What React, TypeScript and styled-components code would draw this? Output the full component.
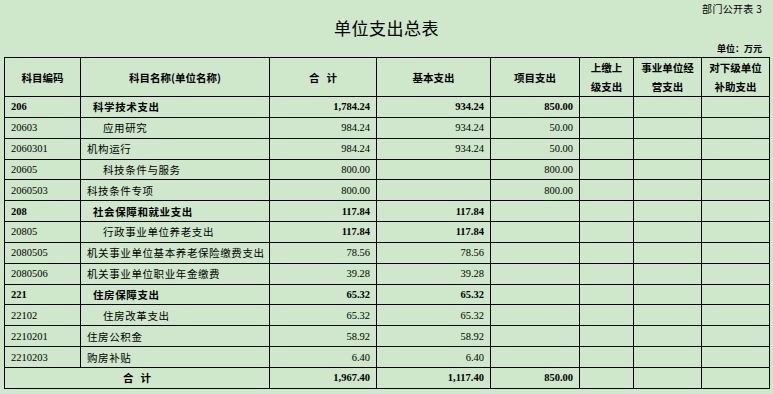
import styled, { createGlobalStyle } from "styled-components";

type Row = {
  code: string;
  name: string;
  level: 1 | 2 | 3;
  total: string;
  basic: string;
  project: string;
};

const rows: Row[] = [
  { code: "206", name: "科学技术支出", level: 1, total: "1,784.24", basic: "934.24", project: "850.00" },
  { code: "20603", name: "应用研究", level: 2, total: "984.24", basic: "934.24", project: "50.00" },
  { code: "2060301", name: "机构运行", level: 3, total: "984.24", basic: "934.24", project: "50.00" },
  { code: "20605", name: "科技条件与服务", level: 2, total: "800.00", basic: "", project: "800.00" },
  { code: "2060503", name: "科技条件专项", level: 3, total: "800.00", basic: "", project: "800.00" },
  { code: "208", name: "社会保障和就业支出", level: 1, total: "117.84", basic: "117.84", project: "" },
  { code: "20805", name: "行政事业单位养老支出", level: 2, total: "117.84", basic: "117.84", project: "" },
  { code: "2080505", name: "机关事业单位基本养老保险缴费支出", level: 3, total: "78.56", basic: "78.56", project: "" },
  { code: "2080506", name: "机关事业单位职业年金缴费", level: 3, total: "39.28", basic: "39.28", project: "" },
  { code: "221", name: "住房保障支出", level: 1, total: "65.32", basic: "65.32", project: "" },
  { code: "22102", name: "住房改革支出", level: 2, total: "65.32", basic: "65.32", project: "" },
  { code: "2210201", name: "住房公积金", level: 3, total: "58.92", basic: "58.92", project: "" },
  { code: "2210203", name: "购房补贴", level: 3, total: "6.40", basic: "6.40", project: "" },
];

// 20805 carries its amounts in bold in the source sheet
const boldAmounts = new Set(["20805"]);

const colWidths = [76, 189, 107, 114, 89, 54, 68, 68];

const GlobalStyle = createGlobalStyle`
  html, body {
    margin: 0;
    padding: 0;
    background: #cfe7cb;
  }
  body {
    font-family: "Noto Sans CJK SC", "Liberation Sans", sans-serif;
    color: #000;
  }
`;

const Page = styled.div`
  width: 773px;
  height: 394px;
  display: flex;
  flex-direction: column;
  padding: 1px 4px 0 4px;
  box-sizing: border-box;
`;

const SheetNo = styled.div`
  align-self: flex-end;
  font-size: 10px;
  line-height: 16px;
  height: 16px;
  padding-right: 7px;
  letter-spacing: 0.3px;
`;

const Title = styled.h1`
  margin: 1px 0 0 0;
  text-align: center;
  font-size: 17px;
  font-weight: 400;
  line-height: 20px;
  letter-spacing: 0.5px;
`;

const Unit = styled.div`
  align-self: flex-end;
  margin-top: 4px;
  font-size: 9px;
  line-height: 14px;
  height: 14px;
  padding-right: 7px;
  font-weight: 700;
`;

const Table = styled.table`
  margin-top: 1px;
  width: 765px;
  table-layout: fixed;
  border-collapse: collapse;
  border: 1px solid #000;
`;

const HeadCell = styled.th`
  border: 1px solid #000;
  height: 38px;
  padding: 0;
  font-size: 10.5px;
  font-weight: 700;
  line-height: 19px;
  text-align: center;
  vertical-align: middle;
`;

const Cell = styled.td<{ $bold?: boolean; $align?: "left" | "right" | "center"; $indent?: number; $num?: boolean }>`
  border: 1px solid #000;
  height: 19.85px;
  padding: 0 ${(p) => (p.$align === "right" ? 6 : 0)}px 0 ${(p) => p.$indent ?? 0}px;
  font-size: 10.5px;
  line-height: 13px;
  white-space: nowrap;
  overflow: hidden;
  text-align: ${(p) => p.$align ?? "left"};
  font-weight: ${(p) => (p.$bold ? 700 : 400)};
  font-family: ${(p) =>
    p.$num
      ? '"Liberation Serif", "Noto Sans CJK SC", serif'
      : '"Noto Sans CJK SC", "Liberation Sans", sans-serif'};
  vertical-align: middle;
`;

const NameText = styled.span`
  letter-spacing: 0.6px;
`;

const indentFor = (level: number) => (level === 1 ? 12 : level === 2 ? 22 : 6);

const App = () => {
  return (
    <Page>
      <GlobalStyle />
      <SheetNo>部门公开表 3</SheetNo>
      <Title>单位支出总表</Title>
      <Unit>单位：万元</Unit>
      <Table>
        <colgroup>
          {colWidths.map((w, i) => (
            <col key={i} style={{ width: w }} />
          ))}
        </colgroup>
        <thead>
          <tr>
            <HeadCell>科目编码</HeadCell>
            <HeadCell>科目名称(单位名称)</HeadCell>
            <HeadCell>合&nbsp;&nbsp;&nbsp;计</HeadCell>
            <HeadCell>基本支出</HeadCell>
            <HeadCell>项目支出</HeadCell>
            <HeadCell>
              上缴上
              <br />
              级支出
            </HeadCell>
            <HeadCell>
              事业单位经
              <br />
              营支出
            </HeadCell>
            <HeadCell>
              对下级单位
              <br />
              补助支出
            </HeadCell>
          </tr>
        </thead>
        <tbody>
          {rows.map((r) => {
            const bold = r.level === 1;
            const boldNum = bold || boldAmounts.has(r.code);
            return (
              <tr key={r.code}>
                <Cell $num $bold={bold} $indent={6}>
                  {r.code}
                </Cell>
                <Cell $bold={bold} $indent={indentFor(r.level)}>
                  <NameText>{r.name}</NameText>
                </Cell>
                <Cell $num $bold={boldNum} $align="right">
                  {r.total}
                </Cell>
                <Cell $num $bold={boldNum} $align="right">
                  {r.basic}
                </Cell>
                <Cell $num $bold={bold} $align="right">
                  {r.project}
                </Cell>
                <Cell />
                <Cell />
                <Cell />
              </tr>
            );
          })}
          <tr>
            <Cell colSpan={2} $bold $align="center">
              合&nbsp;&nbsp;&nbsp;计
            </Cell>
            <Cell $num $bold $align="right">
              1,967.40
            </Cell>
            <Cell $num $bold $align="right">
              1,117.40
            </Cell>
            <Cell $num $bold $align="right">
              850.00
            </Cell>
            <Cell />
            <Cell />
            <Cell />
          </tr>
        </tbody>
      </Table>
    </Page>
  );
};

export default App;
